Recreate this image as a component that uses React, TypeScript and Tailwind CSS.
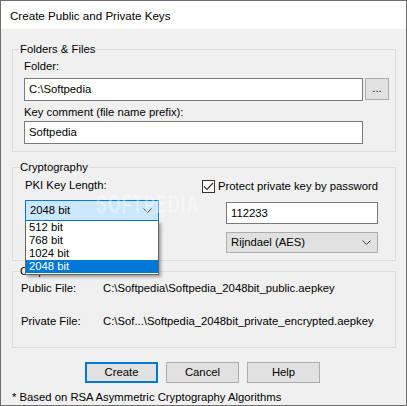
import React from 'react';

const font = { fontFamily: '"Liberation Sans", Arial, sans-serif' };

function Chevron() {
    return (
        <svg width="9" height="5" viewBox="0 0 9 5" className="shrink-0">
            <path d="M0.5 0.5 L4.5 4.5 L8.5 0.5" fill="none" stroke="#444" strokeWidth="1" />
        </svg>
    );
}

function App() {
    const sizes = ['512 bit', '768 bit', '1024 bit', '2048 bit'];

    return (
        <div
            className="relative w-[407px] h-[406px] border border-[#6e6e6e] bg-[#f0f0f0] text-[11.3px] leading-[15px] text-black flex flex-col"
            style={font}
        >
            {/* title bar */}
            <div className="h-[30px] bg-white flex items-center pl-[9px] pt-[1px] text-[11.6px]">
                Create Public and Private Keys
            </div>

            {/* Folders & Files */}
            <fieldset className="ml-[11px] mt-[13px] w-[384px] border border-[#dcdcdc] p-0">
                <legend className="ml-[6px] px-[1px]">Folders &amp; Files</legend>
                <div className="pl-[11px] pb-[7px]">
                    <div className="mt-[2px]">Folder:</div>
                    <div className="mt-[4px] flex gap-[2px]">
                        <div className="w-[339px] h-[23px] bg-white border border-[#7a7a7a] flex items-center pl-[4px]">
                            C:\Softpedia
                        </div>
                        <button className="w-[24px] h-[22px] bg-[#e1e1e1] border border-[#adadad] flex items-center justify-center pb-[2px]">
                            ...
                        </button>
                    </div>
                    <div className="mt-[4px]">Key comment (file name prefix):</div>
                    <div className="mt-[1px] w-[339px] h-[23px] bg-white border border-[#7a7a7a] flex items-center pl-[4px]">
                        Softpedia
                    </div>
                </div>
            </fieldset>

            {/* Cryptography */}
            <fieldset className="ml-[11px] mt-[8px] w-[384px] border border-[#dcdcdc] p-0">
                <legend className="ml-[6px] px-[1px]">Cryptography</legend>
                <div className="flex h-[85px]">
                    <div className="w-[189px] pl-[12px]">
                        <div className="mt-[3px]">PKI Key Length:</div>
                        <div className="relative mt-[7px] w-[134px]">
                            <div className="h-[21px] bg-[#cce8ff] border border-[#0078d7] flex items-center justify-between pl-[4px] pr-[6px]">
                                <span>2048 bit</span>
                                <Chevron />
                            </div>
                            {/* open list */}
                            <div className="absolute left-0 top-[21px] z-10 w-[134px] bg-white border border-[#646464] border-t-0 shadow-[2px_2px_3px_rgba(0,0,0,0.35)] pb-[1px]">
                                {sizes.map((s) => (
                                    <div
                                        key={s}
                                        className={
                                            s === '2048 bit'
                                                ? 'h-[13px] leading-[13px] pl-[3px] bg-[#0078d7] text-white'
                                                : 'h-[13px] leading-[13px] pl-[3px]'
                                        }
                                    >
                                        {s}
                                    </div>
                                ))}
                            </div>
                        </div>
                    </div>
                    <div className="flex-1">
                        <div className="mt-[4px] flex items-center gap-[3px]">
                            <div className="w-[13px] h-[13px] bg-white border border-[#333] flex items-center justify-center">
                                <svg width="11" height="9" viewBox="0 0 11 9">
                                    <path d="M1 4.5 L4 7.5 L10 1" fill="none" stroke="#333" strokeWidth="1.2" />
                                </svg>
                            </div>
                            <span>Protect private key by password</span>
                        </div>
                        <div className="ml-[24px] mt-[8px] w-[152px] h-[22px] bg-white border border-[#7a7a7a] flex items-center pl-[4px]">
                            112233
                        </div>
                        <div className="ml-[24px] mt-[8px] w-[152px] h-[21px] bg-[#e1e1e1] border border-[#adadad] flex items-center justify-between pl-[4px] pr-[6px]">
                            <span>Rijndael (AES)</span>
                            <Chevron />
                        </div>
                    </div>
                </div>
            </fieldset>

            {/* Output */}
            <fieldset className="ml-[11px] mt-[3px] w-[384px] border border-[#dcdcdc] p-0">
                <legend className="ml-[6px] px-[1px]">Output</legend>
                <div className="pl-[8px] h-[66px]">
                    <div className="mt-[2px] flex">
                        <span className="w-[82px]">Public File:</span>
                        <span>C:\Softpedia\Softpedia_2048bit_public.aepkey</span>
                    </div>
                    <div className="mt-[18px] flex">
                        <span className="w-[82px]">Private File:</span>
                        <span>C:\Sof...\Softpedia_2048bit_private_encrypted.aepkey</span>
                    </div>
                </div>
            </fieldset>

            {/* buttons */}
            <div className="mt-[14px] ml-[84px] flex gap-[8px]">
                <button className="w-[73px] h-[21px] bg-[#e1e1e1] border-2 border-[#0078d7]">Create</button>
                <button className="w-[73px] h-[21px] bg-[#e1e1e1] border border-[#adadad]">Cancel</button>
                <button className="w-[73px] h-[21px] bg-[#e1e1e1] border border-[#adadad]">Help</button>
            </div>
            <div className="mt-[7px] ml-[11px]">* Based on RSA Asymmetric Cryptography Algorithms</div>

            {/* watermark */}
            <div className="pointer-events-none absolute left-[95px] top-[196px] origin-left scale-x-[0.62] text-[26px] font-bold tracking-[2px] text-white/40">
                SOFTPEDIA
            </div>
        </div>
    );
}

export default App;
